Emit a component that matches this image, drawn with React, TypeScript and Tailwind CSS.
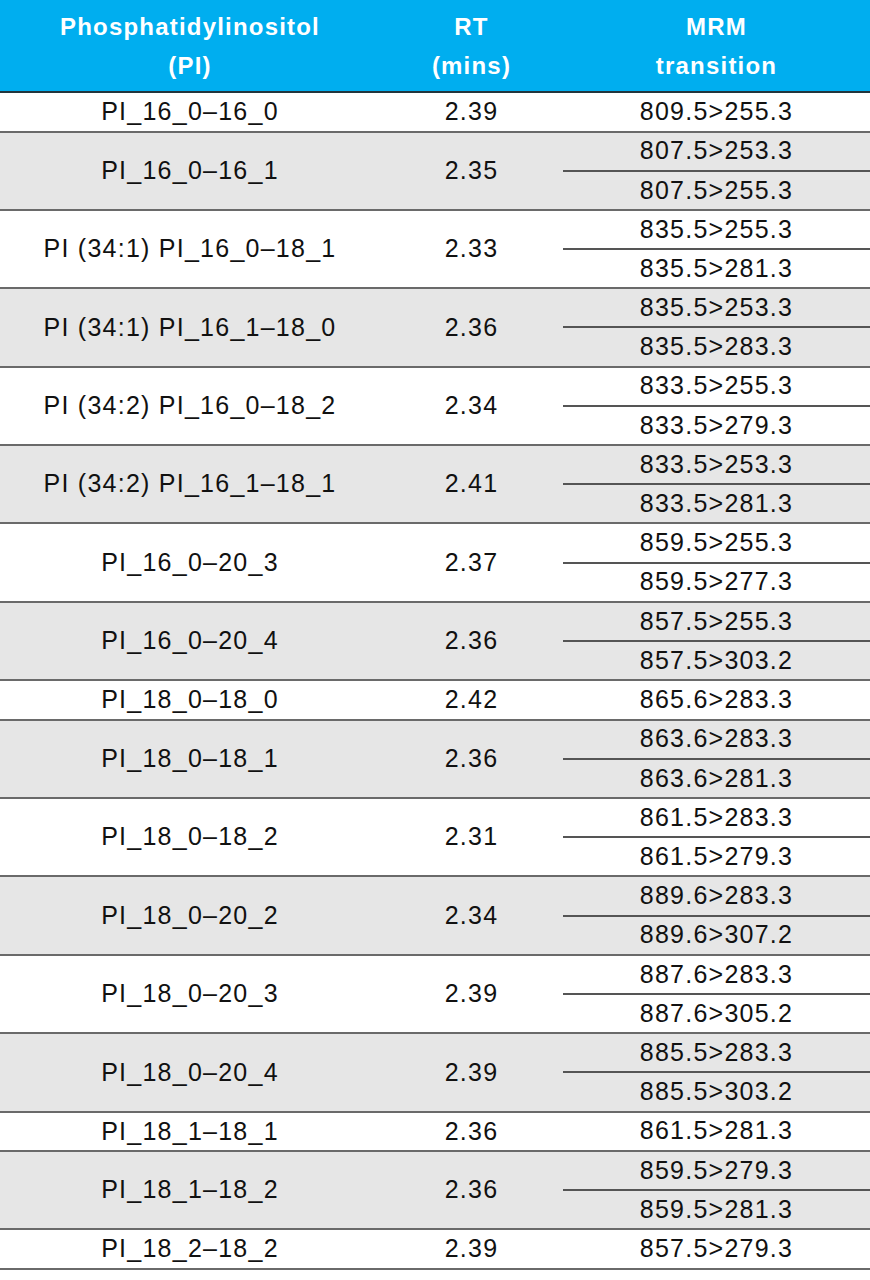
type Group = { name: string; rt: string; mrm: string[] };

const groups: Group[] = [
  { name: "PI_16_0–16_0", rt: "2.39", mrm: ["809.5>255.3"] },
  { name: "PI_16_0–16_1", rt: "2.35", mrm: ["807.5>253.3", "807.5>255.3"] },
  { name: "PI (34:1) PI_16_0–18_1", rt: "2.33", mrm: ["835.5>255.3", "835.5>281.3"] },
  { name: "PI (34:1) PI_16_1–18_0", rt: "2.36", mrm: ["835.5>253.3", "835.5>283.3"] },
  { name: "PI (34:2) PI_16_0–18_2", rt: "2.34", mrm: ["833.5>255.3", "833.5>279.3"] },
  { name: "PI (34:2) PI_16_1–18_1", rt: "2.41", mrm: ["833.5>253.3", "833.5>281.3"] },
  { name: "PI_16_0–20_3", rt: "2.37", mrm: ["859.5>255.3", "859.5>277.3"] },
  { name: "PI_16_0–20_4", rt: "2.36", mrm: ["857.5>255.3", "857.5>303.2"] },
  { name: "PI_18_0–18_0", rt: "2.42", mrm: ["865.6>283.3"] },
  { name: "PI_18_0–18_1", rt: "2.36", mrm: ["863.6>283.3", "863.6>281.3"] },
  { name: "PI_18_0–18_2", rt: "2.31", mrm: ["861.5>283.3", "861.5>279.3"] },
  { name: "PI_18_0–20_2", rt: "2.34", mrm: ["889.6>283.3", "889.6>307.2"] },
  { name: "PI_18_0–20_3", rt: "2.39", mrm: ["887.6>283.3", "887.6>305.2"] },
  { name: "PI_18_0–20_4", rt: "2.39", mrm: ["885.5>283.3", "885.5>303.2"] },
  { name: "PI_18_1–18_1", rt: "2.36", mrm: ["861.5>281.3"] },
  { name: "PI_18_1–18_2", rt: "2.36", mrm: ["859.5>279.3", "859.5>281.3"] },
  { name: "PI_18_2–18_2", rt: "2.39", mrm: ["857.5>279.3"] },
];

export default function App() {
  return (
    <div
      className="w-[870px] min-h-[1280px] bg-white text-[#111]"
      style={{ fontFamily: '"Liberation Sans", Arial, sans-serif' }}
    >
      {/* header */}
      <div className="flex h-[93px] bg-[#00aeef] border-b-[2px] border-[#22363d] text-white font-bold text-[24px] leading-[39px] tracking-[0.05em] text-center">
        <div className="w-[380px] flex flex-col justify-center">
          <span>Phosphatidylinositol</span>
          <span>(PI)</span>
        </div>
        <div className="w-[183px] flex flex-col justify-center">
          <span>RT</span>
          <span>(mins)</span>
        </div>
        <div className="flex-1 flex flex-col justify-center">
          <span>MRM</span>
          <span>transition</span>
        </div>
      </div>

      {groups.map((g, i) => (
        <div
          key={g.name}
          className={
            "flex border-b-[2px] border-[#6a6a6a] text-[25px] tracking-[0.05em] text-center " +
            (i % 2 === 1 ? "bg-[#e6e6e6]" : "bg-white")
          }
        >
          <div className="w-[380px] flex items-center justify-center">{g.name}</div>
          <div className="w-[183px] flex items-center justify-center">{g.rt}</div>
          <div className="flex-1 flex flex-col divide-y-[2px] divide-[#555]">
            {g.mrm.map((m) => (
              <div key={m} className="h-[37.2px] box-content flex items-center justify-center">
                {m}
              </div>
            ))}
          </div>
        </div>
      ))}
    </div>
  );
}
